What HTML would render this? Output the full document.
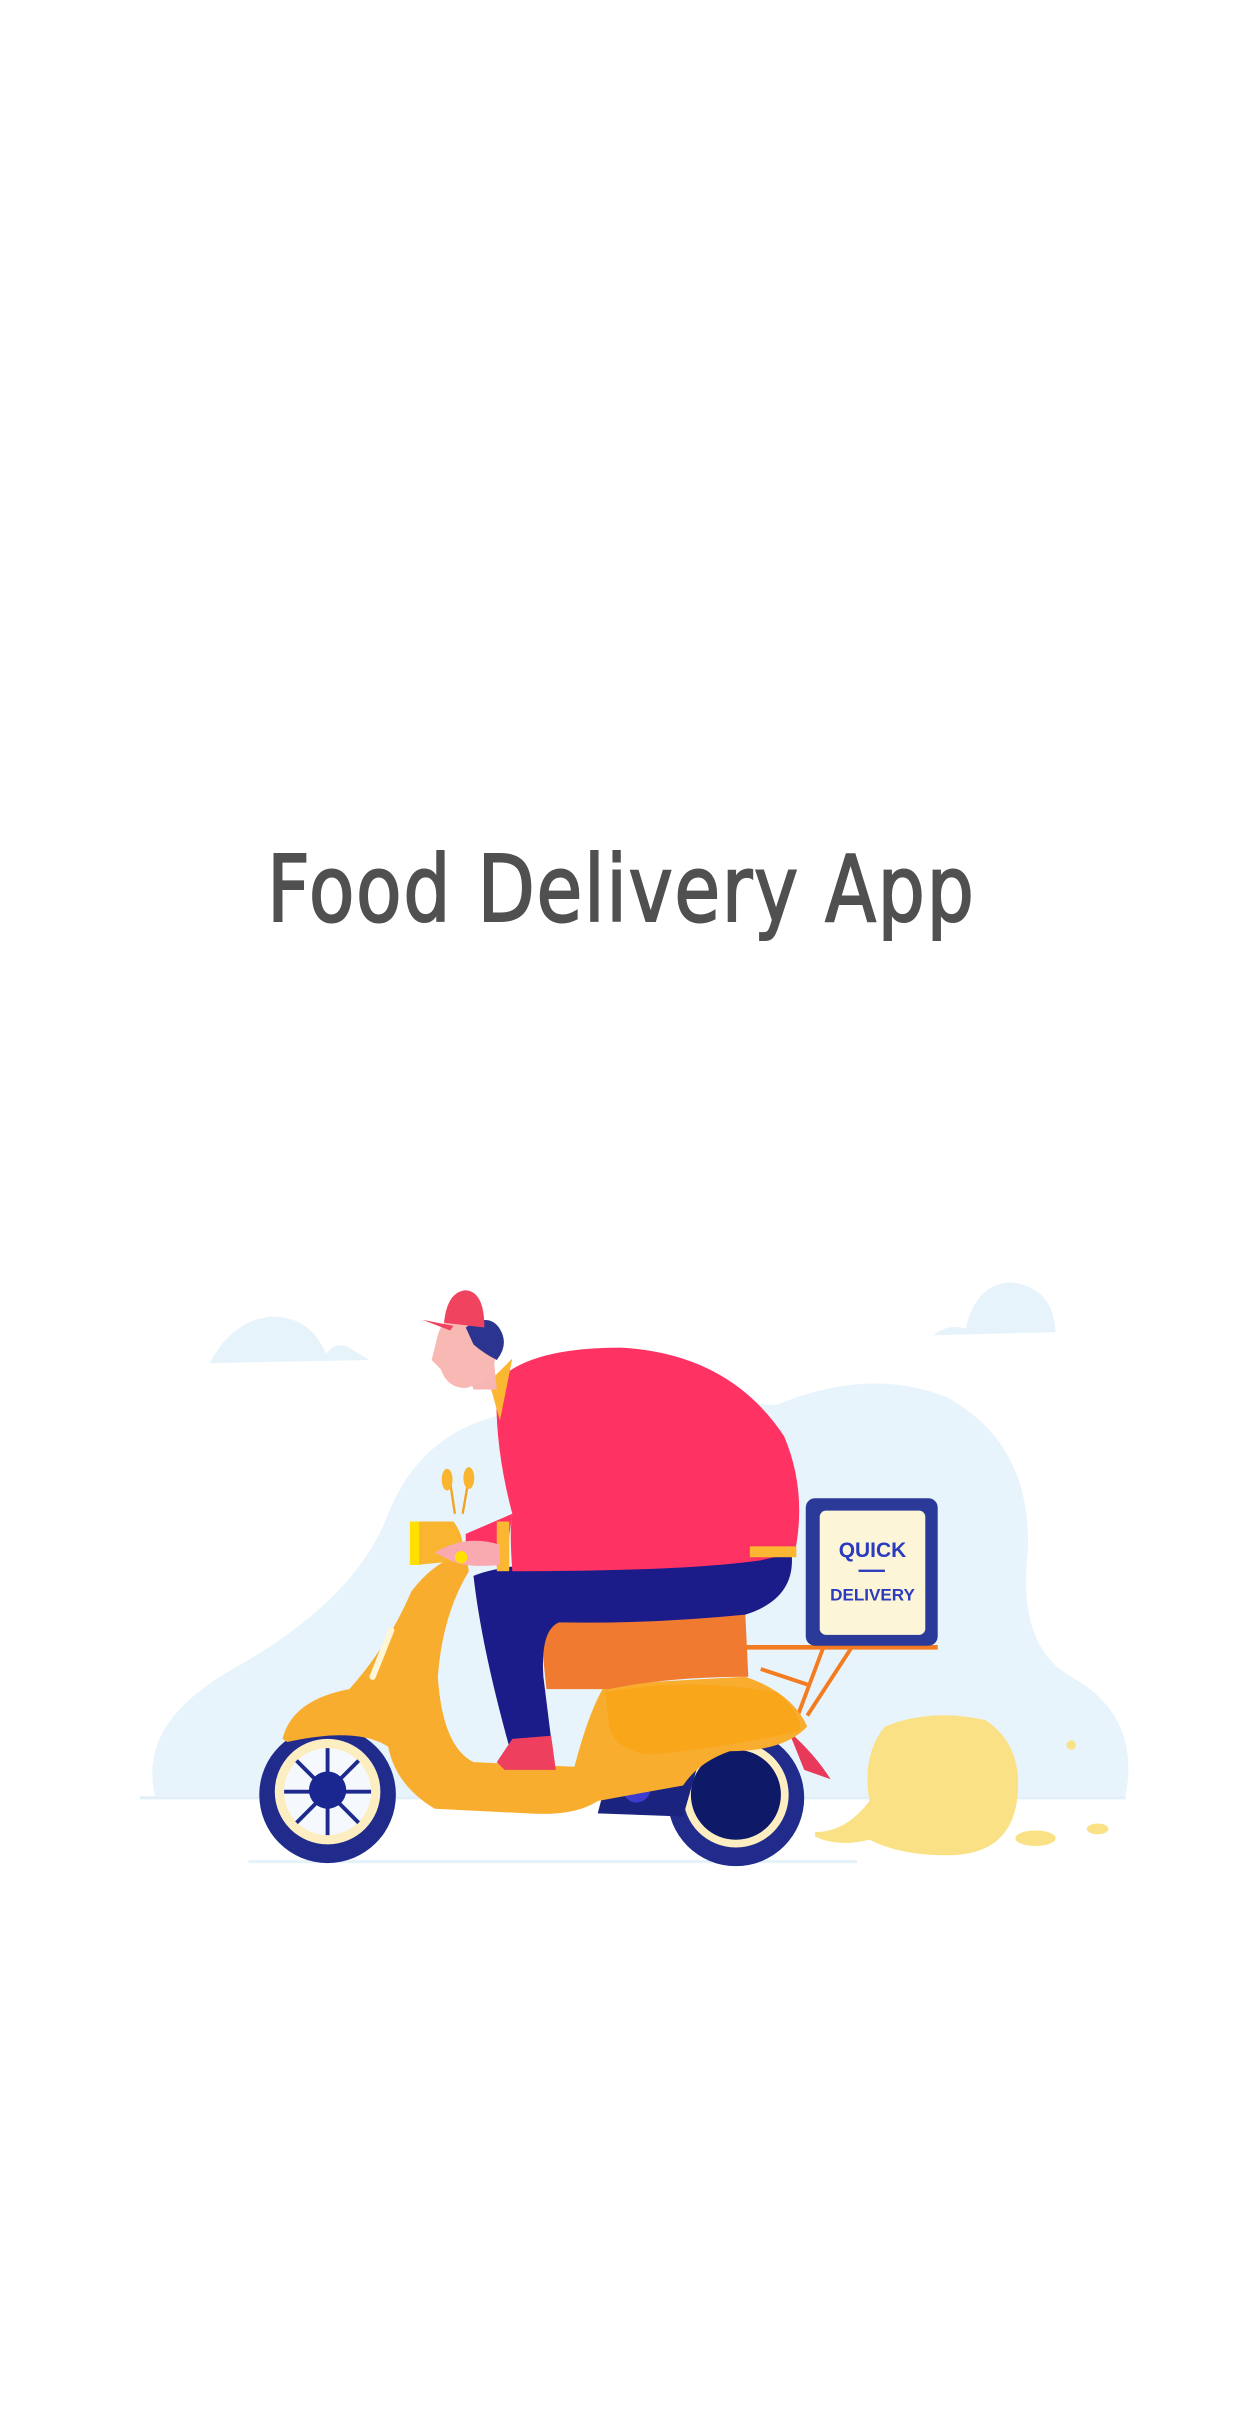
<!DOCTYPE html>
<html><head><meta charset="utf-8"><style>
html,body{margin:0;padding:0;background:#fff;}
body{width:1242px;height:2436px;position:relative;overflow:hidden;}
.t{position:absolute;left:267px;top:835px;width:706px;height:110px;font-family:"DejaVu Sans","Liberation Sans",sans-serif;font-size:92px;color:#505050;white-space:nowrap;line-height:110px;}
.t span{display:inline-block;transform-origin:0 0;transform:scaleX(0.81);letter-spacing:2px;-webkit-text-stroke:2px #505050;}
svg{position:absolute;left:0;top:0;}
</style></head><body>
<div class="t"><span>Food Delivery App</span></div>
<svg width="1242" height="2436" viewBox="0 0 800 1569">
<path d="M135 878 Q150 850 175 848 Q200 848 210 872 Q218 862 228 870 L238 876 Z" fill="#e6f3fb"/>
<path d="M601 860 Q612 852 622 856 Q628 828 650 826 Q678 828 680 858 Z" fill="#e6f3fb"/>
<path d="M100 1157 Q88 1110 150 1075 Q230 1030 250 975 Q270 925 320 912 Q420 900 500 905 Q560 880 610 900 Q665 930 662 1000 Q655 1060 690 1080 Q735 1105 725 1157 Z" fill="#e8f4fb"/>
<line x1="90" y1="1158" x2="725" y2="1158" stroke="#e1eff8" stroke-width="2"/>
<line x1="160" y1="1199" x2="552" y2="1199" stroke="#e6f2fa" stroke-width="2"/>
<path d="M525 1180 Q545 1180 560 1160 Q555 1130 570 1112 Q600 1100 635 1108 Q660 1125 655 1160 Q650 1195 610 1195 Q580 1195 560 1185 Q540 1190 525 1183 Z" fill="#fbe186"/>
<ellipse cx="667" cy="1184" rx="13" ry="5" fill="#fbe186"/>
<ellipse cx="707" cy="1178" rx="7" ry="3.5" fill="#fbe186"/>
<circle cx="690" cy="1124" r="3" fill="#fbe186"/>
<path d="M480 1061 L604 1061" stroke="#f47c20" stroke-width="3"/>
<path d="M548 1062 L520 1105 M530 1062 L512 1110 M490 1075 L520 1085" stroke="#f47c20" stroke-width="2.5"/>
<rect x="519" y="965" width="85" height="95" rx="6" fill="#2b3a98"/>
<rect x="528" y="973" width="68" height="80" rx="4" fill="#fdf5d8"/>
<text x="562" y="1003" font-family="Liberation Sans,sans-serif" font-size="13.5" font-weight="bold" fill="#2a3bbd" text-anchor="middle">QUICK</text>
<rect x="553" y="1011" width="17" height="1.5" fill="#2a3bbd"/>
<text x="562" y="1031" font-family="Liberation Sans,sans-serif" font-size="11" font-weight="bold" fill="#2a3bbd" text-anchor="middle">DELIVERY</text>
<path d="M508 1115 Q525 1130 535 1146 L518 1140 Z" fill="#e8395a"/>
<circle cx="211" cy="1156" r="44" fill="#202b8c"/>
<circle cx="211" cy="1154" r="34" fill="#fdeec2"/>
<circle cx="211" cy="1154" r="28" fill="#f5f9fd"/>
<g stroke="#1e2a8e" stroke-width="2.5">
<line x1="211" y1="1126" x2="211" y2="1182"/><line x1="183" y1="1154" x2="239" y2="1154"/>
<line x1="191" y1="1134" x2="231" y2="1174"/><line x1="231" y1="1134" x2="191" y2="1174"/>
</g>
<circle cx="211" cy="1153" r="12" fill="#1b2790"/>
<circle cx="474" cy="1158" r="44" fill="#202b8c"/>
<circle cx="474" cy="1156" r="34" fill="#fdeec2"/>
<circle cx="474" cy="1156" r="29" fill="#0e1968"/>
<path d="M385 1168 L440 1170 L450 1135 L395 1130 Z" fill="#1a237e"/>
<circle cx="410" cy="1152" r="9" fill="#3d3ccf"/>
<path d="M182 1120 Q188 1095 225 1088 Q250 1060 265 1025 Q280 1005 300 1000 L302 1012 Q285 1040 282 1080 Q285 1125 305 1135 L370 1138 Q380 1100 390 1085 L480 1080 Q510 1090 520 1112 Q505 1128 470 1128 Q450 1135 440 1150 L385 1160 Q370 1170 340 1168 L280 1165 Q255 1150 250 1125 Q230 1112 185 1122 Z" fill="#f8ad2e"/>
<path d="M390 1090 Q440 1080 500 1090 Q518 1105 515 1115 Q470 1125 420 1130 Q395 1128 392 1110 Z" fill="#f9a61a"/>
<path d="M240 1080 L252 1050" stroke="#fff6d8" stroke-width="4" stroke-linecap="round"/>
<path d="M268 980 L292 980 Q300 990 298 1005 L268 1008 Z" fill="#f9b430"/>
<rect x="264" y="980" width="6" height="28" fill="#ffe000"/>
<path d="M293 975 L290 955 M298 975 L302 952" stroke="#f4a020" stroke-width="1.5"/>
<ellipse cx="288" cy="953" rx="3.5" ry="7" fill="#f9b430"/>
<ellipse cx="302" cy="952" rx="3.5" ry="7" fill="#f9b430"/>
<path d="M348 1050 Q350 1040 365 1038 Q420 1036 480 1038 L482 1080 Q430 1080 392 1088 L352 1088 Z" fill="#f07a30"/>
<path d="M305 1015 Q330 1005 400 1005 L510 1002 Q512 1030 480 1040 Q420 1046 360 1045 Q348 1050 350 1080 L355 1120 L328 1125 Q310 1060 305 1015 Z" fill="#1c1b8a"/>
<path d="M320 1135 L330 1120 L355 1118 L358 1140 L325 1140 Z" fill="#ef3f5e"/>
<path d="M320 890 Q340 868 400 868 Q470 872 505 925 Q520 960 512 1000 L490 1005 Q440 1012 330 1012 Q328 985 330 975 Q318 930 320 890 Z" fill="#ff3363"/>
<rect x="483" y="996" width="30" height="7" fill="#fbb632"/>
<path d="M330 975 L300 988 L300 1002 L325 1010 Z" fill="#ff3363"/>
<rect x="320" y="980" width="8" height="32" fill="#fbb632"/>
<path d="M315 890 L330 875 L322 915 Z" fill="#fbb632"/>
<path d="M280 1000 Q300 988 322 995 L322 1008 Q300 1010 290 1005 Z" fill="#f8aab0"/>
<circle cx="297" cy="1003" r="4" fill="#ffe000"/>
<path d="M300 880 L318 875 L320 895 L305 895 Z" fill="#f7b5b4"/>
<path d="M282 860 Q285 848 300 847 Q318 850 320 870 Q318 890 300 894 Q288 894 284 882 L278 876 Z" fill="#f8b9b4"/>
<path d="M300 855 Q315 845 322 856 Q328 866 320 876 Q312 872 305 866 Z" fill="#2b3590"/>
<path d="M286 852 Q288 832 300 831 Q312 832 312 855 Z" fill="#f0435f"/>
<path d="M272 850 L292 854 L290 857 Z" fill="#f0435f"/>
</svg>
</body></html>
